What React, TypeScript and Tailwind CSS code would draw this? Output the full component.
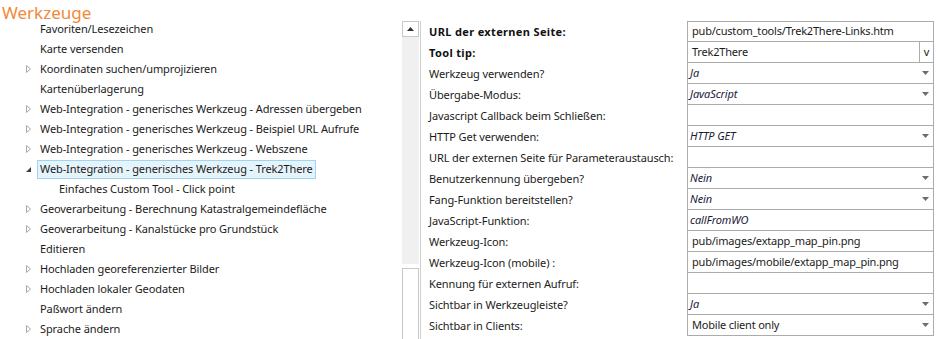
import React from "react";

type TreeItem = { text: string; state: "none" | "collapsed" | "expanded"; level?: number; selected?: boolean };

const tree: TreeItem[] = [
  { text: "Favoriten/Lesezeichen", state: "none" },
  { text: "Karte versenden", state: "none" },
  { text: "Koordinaten suchen/umprojizieren", state: "collapsed" },
  { text: "Kartenüberlagerung", state: "none" },
  { text: "Web-Integration - generisches Werkzeug - Adressen übergeben", state: "collapsed" },
  { text: "Web-Integration - generisches Werkzeug - Beispiel URL Aufrufe", state: "collapsed" },
  { text: "Web-Integration - generisches Werkzeug - Webszene", state: "collapsed" },
  { text: "Web-Integration - generisches Werkzeug - Trek2There", state: "expanded", selected: true },
  { text: "Einfaches Custom Tool - Click point", state: "none", level: 1 },
  { text: "Geoverarbeitung - Berechnung Katastralgemeindefläche", state: "collapsed" },
  { text: "Geoverarbeitung - Kanalstücke pro Grundstück", state: "collapsed" },
  { text: "Editieren", state: "none" },
  { text: "Hochladen georeferenzierter Bilder", state: "collapsed" },
  { text: "Hochladen lokaler Geodaten", state: "collapsed" },
  { text: "Paßwort ändern", state: "none" },
  { text: "Sprache ändern", state: "collapsed" },
];

type Prop = { label: string; bold?: boolean; value: string; italic?: boolean; kind?: "dropdown" | "button" | "text" };

const props: Prop[] = [
  { label: "URL der externen Seite:", bold: true, value: "pub/custom_tools/Trek2There-Links.htm" },
  { label: "Tool tip:", bold: true, value: "Trek2There", kind: "button" },
  { label: "Werkzeug verwenden?", value: "Ja", italic: true, kind: "dropdown" },
  { label: "Übergabe-Modus:", value: "JavaScript", italic: true, kind: "dropdown" },
  { label: "Javascript Callback beim Schließen:", value: "" },
  { label: "HTTP Get verwenden:", value: "HTTP GET", italic: true, kind: "dropdown" },
  { label: "URL der externen Seite für Parameteraustausch:", value: "" },
  { label: "Benutzerkennung übergeben?", value: "Nein", italic: true, kind: "dropdown" },
  { label: "Fang-Funktion bereitstellen?", value: "Nein", italic: true, kind: "dropdown" },
  { label: "JavaScript-Funktion:", value: "callFromWO", italic: true },
  { label: "Werkzeug-Icon:", value: "pub/images/extapp_map_pin.png" },
  { label: "Werkzeug-Icon (mobile) :", value: "pub/images/mobile/extapp_map_pin.png" },
  { label: "Kennung für externen Aufruf:", value: "" },
  { label: "Sichtbar in Werkzeugleiste?", value: "Ja", italic: true, kind: "dropdown" },
  { label: "Sichtbar in Clients:", value: "Mobile client only", kind: "dropdown" },
];

function Arrow({ state }: { state: TreeItem["state"] }) {
  if (state === "collapsed")
    return (
      <svg width="7" height="10" viewBox="0 0 7 10" className="block">
        <polygon points="1.5,1.5 5.5,5 1.5,8.5" fill="none" stroke="#a8a8a8" strokeWidth="1" />
      </svg>
    );
  if (state === "expanded")
    return (
      <svg width="7" height="10" viewBox="0 0 7 10" className="block">
        <polygon points="6,3 6,8 1,8" fill="#404040" />
      </svg>
    );
  return null;
}

function DropArrow() {
  return (
    <svg width="7" height="4" viewBox="0 0 7 4" className="block">
      <polygon points="0,0 7,0 3.5,4" fill="#6d6d6d" />
    </svg>
  );
}

export default function App() {
  return (
    <div
      className="w-[938px] h-[339px] bg-white overflow-hidden text-[11px] tracking-[-0.1px] text-[#1b1b1b]"
      style={{ fontFamily: '"Noto Sans", "Segoe UI", sans-serif' }}
    >
      <div className="flex h-full">
        {/* Left tree */}
        <div className="w-[401px] shrink-0 flex flex-col">
          <div className="h-[19px] pl-[2px] text-[17px] leading-[25px] tracking-normal text-[#f08a3a] whitespace-nowrap">
            Werkzeuge
          </div>
          {tree.map((t, i) => (
            <div key={i} className="h-[20px] flex items-center" style={{ paddingLeft: 24 + (t.level ? 19 : 0) }}>
              <div className="w-[13px] flex items-center justify-start pl-[1px]">
                <Arrow state={t.state} />
              </div>
              <div
                className={
                  "h-[19px] mt-[1px] flex items-center pl-[2px] pr-[2px] border whitespace-nowrap " +
                  (t.selected ? "bg-[#e5f3fb] border-[#9dd5f3]" : "border-transparent")
                }
              >
                {t.text}
              </div>
            </div>
          ))}
        </div>

        {/* Scrollbar */}
        <div className="w-[17px] shrink-0 ml-[1px] pt-[21px] flex flex-col">
          <div className="h-[16px] border border-[#c8c8c8] bg-white flex items-center justify-center">
            <svg width="7" height="4" viewBox="0 0 7 4" className="block">
              <polygon points="0,4 7,4 3.5,0" fill="#333" />
            </svg>
          </div>
          <div className="h-[227px] bg-[#f0f0f0]" />
          <div className="h-[4px] bg-white" />
          <div className="flex-1 border border-[#c8c8c8] border-b-0 bg-white" />
        </div>

        {/* Divider */}
        <div className="w-[2px] shrink-0 pt-[21px]">
          <div className="ml-[1px] w-[1px] h-full bg-[#d0d0d0]" />
        </div>

        {/* Property grid */}
        <div className="flex-1 pt-[21px] pr-[4px]">
          {props.map((p, i) => (
            <div key={i} className="h-[21px] flex">
              <div
                className={
                  "w-[266px] pl-[8px] flex items-center whitespace-nowrap pt-[2px] " +
                  (p.bold ? "font-bold tracking-[0.35px] text-[#111]" : "")
                }
              >
                {p.label}
              </div>
              <div
                className={
                  "flex-1 flex items-center border-l border-r border-b border-[#ababab] " + (i === 0 ? "border-t" : "")
                }
              >
                <div
                  className={
                    "flex-1 whitespace-nowrap " + (p.italic ? "italic pl-[2px] text-[#1a1a3a]" : "pl-[4px] tracking-[-0.2px]")
                  }
                >
                  {p.value}
                </div>
                {p.kind === "dropdown" && (
                  <div className="w-[15px] flex items-center justify-center pr-[1px]">
                    <DropArrow />
                  </div>
                )}
                {p.kind === "button" && (
                  <div className="w-[14px] h-full border-l border-[#ababab] flex items-center justify-center text-[11px]">
                    v
                  </div>
                )}
              </div>
            </div>
          ))}
        </div>
      </div>
    </div>
  );
}
